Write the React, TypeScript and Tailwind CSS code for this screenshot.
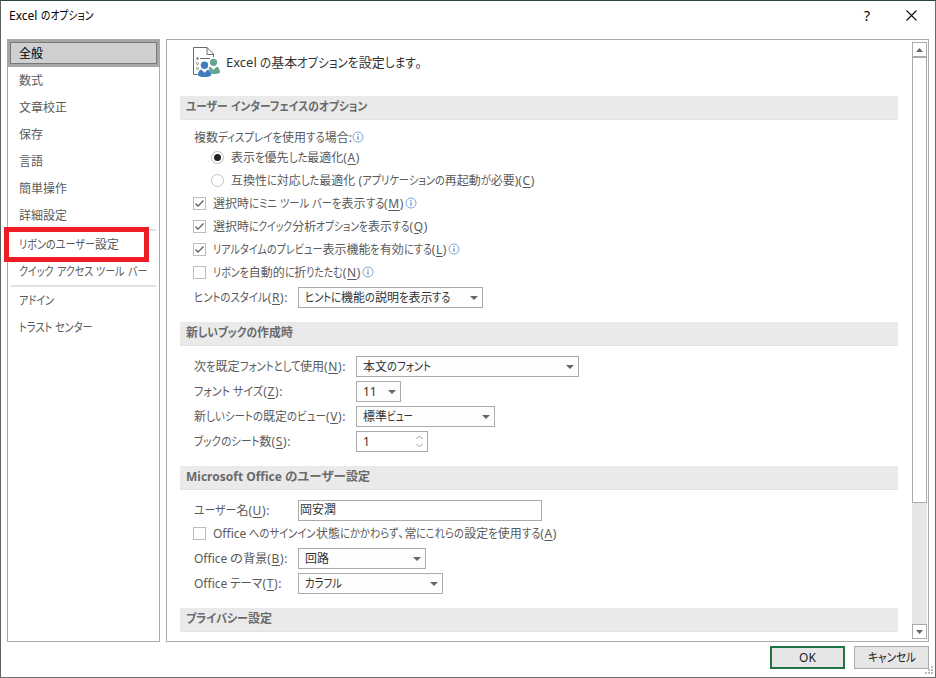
import React, { useLayoutEffect, useRef } from 'react';
import clsx from 'clsx';

type TextProps = {
  children: string;
  w?: number;
  className?: string;
};

// Splits kana, access keys such as (A), and everything else
const TOKENS = /([\u3040-\u30ff]+|\([A-Z]\):?)/;
const KANA = /^[\u3040-\u30ff]+$/;
const ACCESS_KEY = /^\(([A-Z])\)(:?)$/;

// UI text with condensed kana: kana runs are squeezed until the label is w pixels wide
const Text = ({ children, w, className }: TextProps) => {
  const ref = useRef<HTMLSpanElement>(null);

  useLayoutEffect(() => {
    const el = ref.current;
    if (!el || !w) return;
    const runs = Array.from(el.querySelectorAll<HTMLElement>('[data-kana]'));
    runs.forEach((run) => {
      run.style.width = '';
      run.style.transform = '';
    });
    const total = el.getBoundingClientRect().width;
    const widths = runs.map((run) => run.getBoundingClientRect().width);
    const kana = widths.reduce((a, b) => a + b, 0);
    if (!kana) return;
    const k = Math.max(0.5, (w - (total - kana)) / kana);
    runs.forEach((run, i) => {
      run.style.width = `${widths[i] * k}px`;
      run.style.transform = `scaleX(${k})`;
    });
  }, [children, w]);

  return (
    <span ref={ref} className={clsx('inline-block shrink-0 whitespace-pre', className)}>
      {children.split(TOKENS).map((part, i) => {
        if (KANA.test(part)) {
          return (
            <span key={i} data-kana="" className="inline-block origin-left">
              {part}
            </span>
          );
        }
        const key = part.match(ACCESS_KEY);
        if (key) {
          return (
            <span key={i} className="tracking-[0.6px]">
              (<span className="underline underline-offset-2">{key[1]}</span>){key[2]}
            </span>
          );
        }
        return <span key={i}>{part}</span>;
      })}
    </span>
  );
};

const InfoIcon = () => (
  <svg width="12" height="12" viewBox="0 0 12 12" className="relative -top-px shrink-0">
    <circle cx="6" cy="6" r="5" fill="none" stroke="#7ba7d9" />
    <path d="M6 5.2v3.6M6 3v1.2" stroke="#41699c" />
  </svg>
);

const Caret = () => (
  <svg width="8" height="4" viewBox="0 0 8 4" className="shrink-0">
    <path d="M0 0h8L4 4z" fill="#666" />
  </svg>
);

const Select = ({ className, w, children }: { className: string; w?: number; children: string }) => (
  <div
    className={clsx(
      'flex h-[21px] shrink-0 items-center justify-between border border-[#ababab] bg-[#fdfdfd] pr-[4px] pl-[6px] text-[#333]',
      className
    )}
  >
    <Text w={w}>{children}</Text>
    <Caret />
  </div>
);

const Radio = ({ checked }: { checked?: boolean }) => (
  <div className="mr-[7px] ml-[17px] flex size-[13px] shrink-0 items-center justify-center rounded-full border border-[#c0c0c0]">
    {checked && <div className="size-[7px] rounded-full bg-[#222]" />}
  </div>
);

const Checkbox = ({ checked }: { checked?: boolean }) => (
  <div className="mr-[7px] size-[13px] shrink-0 border border-[#bdbdbd]">
    {checked && (
      <svg width="11" height="11" viewBox="0 0 11 11">
        <path d="M1.5 5.5l2.5 2.7L9.5 2.5" fill="none" stroke="#555" strokeWidth="1.2" />
      </svg>
    )}
  </div>
);

const SectionTitle = ({ children, w }: { children: string; w: number }) => (
  <div className="flex h-6 w-[718px] items-center border-b border-[#e2e2e2] bg-[#eaeaea] pl-[6px] font-bold text-[#6a6a6a]">
    <Text w={w} className="relative -top-px">
      {children}
    </Text>
  </div>
);

const Row = ({ className, children }: { className: string; children: React.ReactNode }) => (
  <div className={clsx('flex items-center', className)}>{children}</div>
);

const NavItem = ({ children, w, className = 'h-[27px]' }: { children: string; w?: number; className?: string }) => (
  <div className={clsx('flex items-center pl-[11px]', className)}>
    <Text w={w}>{children}</Text>
  </div>
);

const Sidebar = () => (
  <nav className="h-[603px] w-[153px] shrink-0 border border-[#ababab]">
    <div className="-mx-px -mt-px h-7 border-[3px] border-[#a6a6a6]">
      <div className="flex h-full items-center border border-[#777] bg-[#d0d0d0] pt-px pl-2 text-black">
        <Text>全般</Text>
      </div>
    </div>
    <NavItem>数式</NavItem>
    <NavItem>文章校正</NavItem>
    <NavItem>保存</NavItem>
    <NavItem>言語</NavItem>
    <NavItem>簡単操作</NavItem>
    <NavItem>詳細設定</NavItem>
    <div className="mx-[3px] h-[2px] bg-[#e1e1e1]" />
    <NavItem w={100}>リボンのユーザー設定</NavItem>
    <NavItem w={128}>クイック アクセス ツール バー</NavItem>
    <div className="mx-[3px] h-[2px] bg-[#e1e1e1]" />
    <NavItem w={35}>アドイン</NavItem>
    <NavItem w={74}>トラスト センター</NavItem>
  </nav>
);

const HeaderIcon = () => (
  <svg width="28" height="30" viewBox="0 0 28 30" className="mr-[5px] shrink-0">
    <path d="M4.500 27.500H.5V.5H14L20.500 7V10" fill="none" stroke="#6b6b6b" />
    <path d="M14 .5V7.500H20.500M7 11.500H17" fill="none" stroke="#6b6b6b" />
    <circle cx="4.500" cy="11.500" r="1.200" fill="#777" />
    <circle cx="4.500" cy="16.500" r="1.100" fill="none" stroke="#777" strokeWidth=".8" />
    <circle cx="4.500" cy="21.500" r="1.100" fill="none" stroke="#777" strokeWidth=".8" />
    <circle cx="20.500" cy="15.300" r="3.600" fill="#65a48f" />
    <path d="M15.500 20.500l1.700-.8 3.300 3 3.300-3c2.200.7 3.200 2.800 3.200 6-2 1.200-5 1.500-8.500 1.200z" fill="#65a48f" />
    <circle cx="11.500" cy="18.300" r="3.700" fill="#427bbd" />
    <path d="M5 28.500c0-3.200 1-5.200 3.200-6l3.300 3.300 3.300-3.300c2.200.8 3.400 2.800 3.400 6-3.500 2-9.700 2-13.200 0z" fill="#427bbd" />
  </svg>
);

const ScrollBar = () => (
  <div className="mt-[2px] mr-px flex h-[597px] w-[15px] flex-col bg-[#e6e6e6]">
    <div className="flex h-[15px] items-center justify-center border border-[#ababab] bg-white">
      <svg width="7" height="4" viewBox="0 0 7 4">
        <path d="M0 4h7L3.500 0z" fill="#666" />
      </svg>
    </div>
    <div className="h-[446px] border border-[#ababab] bg-white" />
    <div className="mt-auto flex h-[15px] items-center justify-center border border-[#ababab] bg-white">
      <svg width="7" height="4" viewBox="0 0 7 4">
        <path d="M0 0h7L3.500 4z" fill="#666" />
      </svg>
    </div>
  </div>
);

const Content = () => (
  <div className="w-[732px] pl-[13px]">
    <div className="flex h-14 items-center pb-[12px] pl-[13px] text-[13px] text-[#333]">
      <HeaderIcon />
      <Text w={196}>Excel の基本オプションを設定します。</Text>
    </div>

    <SectionTitle w={181}>ユーザー インターフェイスのオプション</SectionTitle>
    <div className="h-[202px] pt-2 pl-[14px]">
      <Row className="h-[19px]">
        <Text w={158}>複数ディスプレイを使用する場合:</Text>
        <InfoIcon />
      </Row>
      <Row className="h-[21px]">
        <Radio checked />
        <Text w={129}>表示を優先した最適化(A)</Text>
      </Row>
      <Row className="mt-px h-[23px]">
        <Radio />
        <Text w={304}>互換性に対応した最適化 (アプリケーションの再起動が必要)(C)</Text>
      </Row>
      <Row className="-ml-px h-[23px]">
        <Checkbox checked />
        <Text w={191} className="mr-px">
          選択時にミニ ツール バーを表示する(M)
        </Text>
        <InfoIcon />
      </Row>
      <Row className="-ml-px h-[23px]">
        <Checkbox checked />
        <Text w={215}>選択時にクイック分析オプションを表示する(Q)</Text>
      </Row>
      <Row className="-ml-px h-[23px]">
        <Checkbox checked />
        <Text w={234} className="mr-px">
          リアルタイムのプレビュー表示機能を有効にする(L)
        </Text>
        <InfoIcon />
      </Row>
      <Row className="-ml-px h-[23px]">
        <Checkbox />
        <Text w={148} className="mr-px">
          リボンを自動的に折りたたむ(N)
        </Text>
        <InfoIcon />
      </Row>
      <Row className="mt-px h-[25px]">
        <div className="w-[104px]">
          <Text w={94}>ヒントのスタイル(R):</Text>
        </div>
        <Select className="w-[185px]" w={146}>
          ヒントに機能の説明を表示する
        </Select>
      </Row>
    </div>

    <SectionTitle w={107}>新しいブックの作成時</SectionTitle>
    <div className="h-[120px] pt-2 pl-[14px]">
      <Row className="h-[25px]">
        <div className="w-[162px]">
          <Text w={152}>次を既定フォントとして使用(N):</Text>
        </div>
        <Select className="w-[223px]" w={68}>
          本文のフォント
        </Select>
      </Row>
      <Row className="h-[25px]">
        <div className="w-[162px]">
          <Text w={89}>フォント サイズ(Z):</Text>
        </div>
        <Select className="w-[45px]">11</Select>
      </Row>
      <Row className="h-[25px]">
        <div className="w-[162px]">
          <Text w={152}>新しいシートの既定のビュー(V):</Text>
        </div>
        <Select className="w-[139px]" w={50}>
          標準ビュー
        </Select>
      </Row>
      <Row className="h-[25px]">
        <div className="w-[162px]">
          <Text w={97}>ブックのシート数(S):</Text>
        </div>
        <div className="flex h-[21px] w-[72px] items-center justify-between border border-[#ababab] pr-[4px] pl-[6px] text-[#333]">
          <span>1</span>
          <svg width="7" height="13" viewBox="0 0 7 13">
            <path d="M.5 4l3-3 3 3M.5 9l3 3 3-3" fill="none" stroke="#999" />
          </svg>
        </div>
      </Row>
    </div>

    <SectionTitle w={184}>Microsoft Office のユーザー設定</SectionTitle>
    <div className="h-[118px] pt-2 pl-[14px]">
      <Row className="h-[25px]">
        <div className="w-[104px]">
          <Text w={76}>ユーザー名(U):</Text>
        </div>
        <div className="flex h-[21px] w-[244px] items-center border border-[#ababab] pl-px text-[#333]">
          <Text className="relative -top-px">岡安潤</Text>
        </div>
      </Row>
      <Row className="-ml-px h-[21px]">
        <Checkbox />
        <Text w={344}>Office へのサインイン状態にかかわらず、常にこれらの設定を使用する(A)</Text>
      </Row>
      <Row className="mt-[2px] h-[25px]">
        <div className="w-[104px]">
          <Text w={94}>Office の背景(B):</Text>
        </div>
        <Select className="w-[128px]">回路</Select>
      </Row>
      <Row className="h-[25px]">
        <div className="w-[104px]">
          <Text w={88}>Office テーマ(T):</Text>
        </div>
        <Select className="w-[145px]" w={37}>
          カラフル
        </Select>
      </Row>
    </div>

    <SectionTitle w={86}>プライバシー設定</SectionTitle>
  </div>
);

const App = () => (
  <div className="relative h-[678px] w-[936px] overflow-hidden border border-t-[#244a38] border-r-[#6b6b6b] border-b-[#6b6b6b] border-l-[#5c6660] bg-white font-['Noto_Sans','Noto_Sans_CJK_JP',sans-serif] text-[12px] leading-[18px] text-[#5a5a5a] [font-feature-settings:'palt','liga'_0]">
    <header className="flex h-[38px] items-center pb-[9px] pl-2 text-black">
      <Text w={84}>Excel のオプション</Text>
      <div className="ml-auto flex items-center pr-[18px]">
        <span className="mr-[36px] text-[14px]">?</span>
        <svg width="11" height="11" viewBox="0 0 11 11">
          <path d="M.5.5l10 10M10.500.5l-10 10" stroke="#111" strokeWidth="1.100" />
        </svg>
      </div>
    </header>

    <div className="flex h-[603px] gap-[6px] pl-[6px]">
      <Sidebar />
      <main className="flex w-[763px] justify-between border border-[#ababab]">
        <Content />
        <ScrollBar />
      </main>
    </div>

    <footer className="flex justify-end gap-[9px] pt-1 pr-[6px] text-[#222]">
      <button className="flex h-[23px] w-[75px] items-center justify-center border-2 border-[#217346] bg-[#e6e6e6]">
        OK
      </button>
      <button className="flex h-[23px] w-[75px] items-center justify-center border border-[#ababab] bg-[#e6e6e6]">
        <Text w={48}>キャンセル</Text>
      </button>
    </footer>

    {/* resize grip */}
    <svg width="9" height="9" viewBox="0 0 9 9" className="absolute right-px bottom-[2px]">
      <path d="M6 0h2v2H6zM3 3h2v2H3zM6 3h2v2H6zM0 6h2v2H0zM3 6h2v2H3zM6 6h2v2H6z" fill="#bbb" />
    </svg>

    {/* callout around the ribbon settings item */}
    <div className="absolute top-[226px] left-[3px] h-[35px] w-[145px] border-[5px] border-[#ee1c24]" />
  </div>
);

export default App;
